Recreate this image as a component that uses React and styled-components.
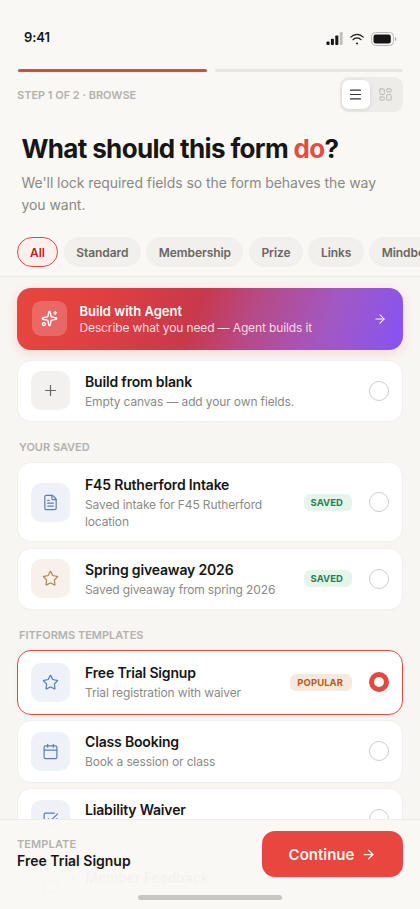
import React, { useState } from "react";
import styled, { createGlobalStyle, css } from "styled-components";
import {
  ArrowRight,
  Calendar,
  FileText,
  LayoutDashboard,
  Menu,
  MessageSquare,
  Plus,
  Sparkles,
  SquareCheckBig,
  Star,
} from "lucide-react";

const GlobalStyle = createGlobalStyle`
  * {
    box-sizing: border-box;
  }
  body {
    margin: 0;
    background: #faf8f5;
    color: #171614;
    font-family: Inter, "Liberation Sans", sans-serif;
  }
  button {
    font-family: inherit;
    border: none;
    cursor: pointer;
  }
  h1, h2, h3, p {
    margin: 0;
  }
`;

const Screen = styled.main`
  position: relative;
  width: 420px;
  height: 909px;
  overflow: hidden;
  display: flex;
  flex-direction: column;
  background: #faf8f5;
`;

const StatusBar = styled.div`
  height: 69px;
  padding: 6px 23.5px 0 24px;
  display: flex;
  align-items: center;
  justify-content: space-between;
  flex-shrink: 0;
`;

const Clock = styled.span`
  font-size: 13px;
  font-weight: 600;
  letter-spacing: -0.1px;
  line-height: 16px;
  margin-bottom: 1px;
`;

const StatusIcons = styled.div`
  display: flex;
  align-items: center;
  gap: 7px;
  padding-top: 2px;
`;

const Progress = styled.div`
  display: flex;
  gap: 8px;
  padding: 0 17px 0 17.5px;
  flex-shrink: 0;
`;

const ProgressStep = styled.span`
  flex: ${({ $done }) => ($done ? "0 0 189.5px" : 1)};
  height: 3px;
  border-radius: 2px;
  background: ${({ $done }) => ($done ? "#dd4843" : "#e8e6e2")};
`;

const StepRow = styled.div`
  height: 35px;
  margin-top: 5px;
  padding: 0 17px;
  display: flex;
  align-items: center;
  justify-content: space-between;
  flex-shrink: 0;
`;

const StepLabel = styled.span`
  font-size: 11px;
  font-weight: 600;
  letter-spacing: -0.02px;
  color: #b3b1ad;
`;

const ViewToggle = styled.div`
  width: 63.5px;
  height: 35px;
  padding: 3px 3px 3px 2px;
  display: flex;
  gap: 2px;
  border-radius: 9px;
  background: #eeece9;
`;

const ToggleButton = styled.button`
  flex: 1;
  padding: 0;
  display: flex;
  align-items: center;
  justify-content: center;
  border-radius: 7px;
  color: ${({ $active }) => ($active ? "#343431" : "#b9b7b3")};
  background: ${({ $active }) => ($active ? "#fff" : "transparent")};
  box-shadow: ${({ $active }) => ($active ? "0 1px 4px rgba(0, 0, 0, 0.1)" : "none")};
`;

const Intro = styled.header`
  padding: 21px 21.5px 0;
  flex-shrink: 0;
`;

const Title = styled.h1`
  font-size: 26px;
  font-weight: 700;
  line-height: 32px;
  letter-spacing: -0.65px;
  white-space: nowrap;

  span {
    color: #e74a43;
  }
`;

const Subtitle = styled.p`
  margin-top: 7px;
  font-size: 14px;
  line-height: 22px;
  letter-spacing: -0.06px;
  color: #8b8984;
`;

const Chips = styled.nav`
  height: 61px;
  padding: 21px 0 0 17px;
  display: flex;
  gap: 5.5px;
  overflow: hidden;
  border-bottom: 1px solid #f0eeea;
  flex-shrink: 0;
`;

const Chip = styled.button`
  height: 30px;
  padding: 0 12.5px;
  flex-shrink: 0;
  font-size: 12px;
  font-weight: 600;
  letter-spacing: -0.08px;
  border-radius: 16px;
  color: #686661;
  background: #f2f0ed;

  ${({ $active }) =>
    $active &&
    css`
      padding: 0 12px;
      margin-right: 0.5px;
      color: #c32022;
      background: #fff0ee;
      border: 1px solid #d64a48;
    `}
`;

const List = styled.section`
  flex: 1;
  min-height: 0;
  padding: 10.5px 17px 0;
  overflow: hidden;
  background: #f8f6f3;
`;

const AgentCard = styled.button`
  width: 386px;
  height: 62.5px;
  padding: 0 16px 0 15px;
  display: flex;
  align-items: center;
  border-radius: 14px;
  color: #fff;
  text-align: left;
  background: linear-gradient(110deg, #e8463f 0%, #e04140 20%, #c9384c 46%, #b64a86 60%, #a258c4 80%, #8954ed 97%);
  box-shadow: 0 3px 12px rgba(232, 70, 63, 0.18);
`;

const AgentIcon = styled.span`
  width: 35px;
  height: 35px;
  display: flex;
  align-items: center;
  justify-content: center;
  border-radius: 9px;
  background: rgba(255, 255, 255, 0.2);
`;

const AgentText = styled.span`
  flex: 1;
  margin-left: 12.5px;
  padding-top: 1px;

  strong {
    display: block;
    font-size: 13px;
    font-weight: 600;
    line-height: 17px;
  }
  small {
    display: block;
    font-size: 12px;
    line-height: 16px;
    letter-spacing: -0.13px;
    color: #fbdce0;
  }
`;

const SectionLabel = styled.h2`
  height: 40px;
  padding: 18px 2px 0;
  font-size: 11px;
  line-height: 14px;
  font-weight: 600;
  color: #b3b1ad;
`;

const Card = styled.article`
  width: 386px;
  height: ${({ $tall }) => ($tall ? "80px" : "62.5px")};
  margin-top: ${({ $gap }) => $gap || 0}px;
  padding: 0 13px;
  display: flex;
  align-items: center;
  border-radius: 14px;
  border: 1px solid #f2f0ed;
  background: #fff;
  box-shadow: 0 1px 2px rgba(40, 30, 20, 0.01);

  ${({ $selected }) =>
    $selected &&
    css`
      height: 64.5px;
      border-color: #d94e4c;
      box-shadow: 0 0 5px rgba(232, 70, 63, 0.06);
    `}
`;

const tones = {
  gray: { color: "#656561", background: "#f2f1ef" },
  blue: { color: "#5b7cb8", background: "#eef2f8" },
  gold: { color: "#a88b50", background: "#f8f1eb" },
};

const IconTile = styled.span`
  width: 39px;
  height: 39px;
  flex-shrink: 0;
  display: flex;
  align-items: center;
  justify-content: center;
  border-radius: 10px;
  color: ${({ $tone }) => tones[$tone].color};
  background: ${({ $tone }) => tones[$tone].background};
`;

const CardText = styled.div`
  flex: 1;
  margin-left: 15px;

  h3 {
    font-size: 14px;
    font-weight: 600;
    line-height: 19px;
    letter-spacing: -0.17px;
    white-space: nowrap;
  }
  p {
    margin-top: 2px;
    font-size: 12px;
    line-height: 17px;
    letter-spacing: -0.13px;
    color: #8c8a86;
  }
`;

const Badge = styled.span`
  height: 17px;
  padding: 0 9px 0 7px;
  margin-right: 17px;
  border-radius: 6px;
  font-size: 9.5px;
  font-weight: 700;
  line-height: 17px;
  letter-spacing: 0.05px;
  color: ${({ $popular }) => ($popular ? "#b65b1e" : "#24824f")};
  background: ${({ $popular }) => ($popular ? "#f8e9df" : "#e7f4ec")};
`;

const Radio = styled.span`
  width: 20px;
  height: 20px;
  flex-shrink: 0;
  border-radius: 50%;
  border: ${({ $selected }) => ($selected ? "5px solid #e4473f" : "1px solid #cfcecb")};
  background: #fff;
`;

const Footer = styled.footer`
  position: absolute;
  left: 0;
  right: 0;
  bottom: 0;
  height: 90px;
  padding: 11px 17px 0;
  display: flex;
  flex-direction: column;
  align-items: center;
  border-top: 1px solid #eeece8;
  background: rgba(250, 248, 245, 0.975);
`;

const FooterRow = styled.div`
  width: 100%;
  display: flex;
  align-items: center;
  justify-content: space-between;
`;

const Selection = styled.div`
  margin-bottom: 2px;

  p {
    font-size: 11px;
    font-weight: 600;
    line-height: 15px;
    letter-spacing: 0.1px;
    color: #b3b1ad;
  }
  strong {
    display: block;
    font-size: 14px;
    font-weight: 600;
    line-height: 18px;
  }
`;

const ContinueButton = styled.button`
  width: 141px;
  height: 46px;
  padding: 0;
  display: flex;
  align-items: center;
  justify-content: center;
  gap: 7px;
  border-radius: 13px;
  font-size: 15px;
  font-weight: 600;
  color: #fff5ee;
  background: #e8463f;
`;

const HomeIndicator = styled.span`
  width: 144px;
  height: 5px;
  margin-top: 18px;
  border-radius: 3px;
  background: #c8c6c2;
`;

const filters = ["All", "Standard", "Membership", "Prize", "Links", "Mindbody"];

const blank = { id: "blank", name: "Build from blank", text: "Empty canvas — add your own fields.", icon: Plus, tone: "gray" };

const saved = [
  { id: "f45", name: "F45 Rutherford Intake", text: "Saved intake for F45 Rutherford location", icon: FileText, tone: "blue", badge: "SAVED", tall: true },
  { id: "spring", name: "Spring giveaway 2026", text: "Saved giveaway from spring 2026", icon: Star, tone: "gold", badge: "SAVED" },
];

const templates = [
  { id: "trial", name: "Free Trial Signup", text: "Trial registration with waiver", icon: Star, tone: "blue", badge: "POPULAR" },
  { id: "class", name: "Class Booking", text: "Book a session or class", icon: Calendar, tone: "blue" },
  { id: "waiver", name: "Liability Waiver", text: "", icon: SquareCheckBig, tone: "blue" },
  { id: "feedback", name: "Member Feedback", text: "", icon: MessageSquare, tone: "blue" },
];

function SignalIcon() {
  return (
    <svg width="17" height="13" viewBox="0 0 17 13" fill="#171614">
      <rect x="0.5" y="9.5" width="3" height="3.5" rx="0.8" />
      <rect x="4.9" y="6.7" width="3" height="6.3" rx="0.8" />
      <rect x="9.3" y="3.5" width="3" height="9.5" rx="0.8" />
      <rect x="13.7" y="0" width="3" height="13" rx="0.8" opacity="0.25" />
    </svg>
  );
}

function WifiIcon() {
  return (
    <svg width="14" height="12" viewBox="0 0 14 12" fill="none" stroke="#171614" strokeWidth="1.2" strokeLinecap="round">
      <path d="M0.8 4.1C4.3 0.4 9.7 0.4 13.2 4.1" />
      <path d="M3 6.7C5.3 4.3 8.7 4.3 11 6.7" />
      <circle cx="7" cy="10.4" r="1" fill="#171614" stroke="none" />
    </svg>
  );
}

function BatteryIcon() {
  return (
    <svg width="26" height="14" viewBox="0 0 26 14" fill="none">
      <rect x="0.5" y="0.5" width="22" height="13" rx="4" stroke="#bbb9b5" />
      <rect x="2.5" y="2.5" width="17.3" height="9" rx="2.2" fill="#171614" />
      <path d="M24 5V9C25.8 8.3 25.8 5.7 24 5Z" fill="#aaa8a4" />
    </svg>
  );
}

function FormCard({ item, selected, gap, onSelect }) {
  const Icon = item.icon;
  return (
    <Card $selected={selected} $tall={item.tall} $gap={gap} onClick={() => onSelect(item)}>
      <IconTile $tone={item.tone}>
        <Icon size={17} strokeWidth={1.7} />
      </IconTile>
      <CardText>
        <h3>{item.name}</h3>
        <p>{item.text || "\u00a0"}</p>
      </CardText>
      {item.badge && <Badge $popular={item.badge === "POPULAR"}>{item.badge}</Badge>}
      <Radio $selected={selected} />
    </Card>
  );
}

export default function App() {
  const [filter, setFilter] = useState("All");
  const [view, setView] = useState("list");
  const [selected, setSelected] = useState(templates[0]);

  return (
    <Screen>
      <GlobalStyle />
      <StatusBar>
        <Clock>9:41</Clock>
        <StatusIcons>
          <SignalIcon />
          <WifiIcon />
          <BatteryIcon />
        </StatusIcons>
      </StatusBar>
      <Progress>
        <ProgressStep $done />
        <ProgressStep />
      </Progress>
      <StepRow>
        <StepLabel>STEP 1 OF 2 · BROWSE</StepLabel>
        <ViewToggle>
          <ToggleButton $active={view === "list"} onClick={() => setView("list")}>
            <Menu size={15} strokeWidth={1.8} />
          </ToggleButton>
          <ToggleButton $active={view === "grid"} onClick={() => setView("grid")}>
            <LayoutDashboard size={15} strokeWidth={1.6} />
          </ToggleButton>
        </ViewToggle>
      </StepRow>
      <Intro>
        <Title>
          What should this form <span>do</span>?
        </Title>
        <Subtitle>We'll lock required fields so the form behaves the way you want.</Subtitle>
      </Intro>
      <Chips>
        {filters.map((name) => (
          <Chip key={name} $active={filter === name} onClick={() => setFilter(name)}>
            {name}
          </Chip>
        ))}
      </Chips>
      <List>
        <AgentCard>
          <AgentIcon>
            <Sparkles size={17} strokeWidth={2} />
          </AgentIcon>
          <AgentText>
            <strong>Build with Agent</strong>
            <small>Describe what you need — Agent builds it</small>
          </AgentText>
          <ArrowRight size={14} strokeWidth={1.8} />
        </AgentCard>
        <FormCard item={blank} gap={9.5} selected={selected.id === "blank"} onSelect={setSelected} />
        <SectionLabel>YOUR SAVED</SectionLabel>
        {saved.map((item, i) => (
          <FormCard key={item.id} item={item} gap={i ? 5.5 : 0} selected={selected.id === item.id} onSelect={setSelected} />
        ))}
        <SectionLabel>FITFORMS TEMPLATES</SectionLabel>
        {templates.map((item, i) => (
          <FormCard key={item.id} item={item} gap={i ? 5.5 : 0} selected={selected.id === item.id} onSelect={setSelected} />
        ))}
      </List>
      <Footer>
        <FooterRow>
          <Selection>
            <p>TEMPLATE</p>
            <strong>{selected.name}</strong>
          </Selection>
          <ContinueButton>
            Continue <ArrowRight size={15} strokeWidth={2} />
          </ContinueButton>
        </FooterRow>
        <HomeIndicator />
      </Footer>
    </Screen>
  );
}
